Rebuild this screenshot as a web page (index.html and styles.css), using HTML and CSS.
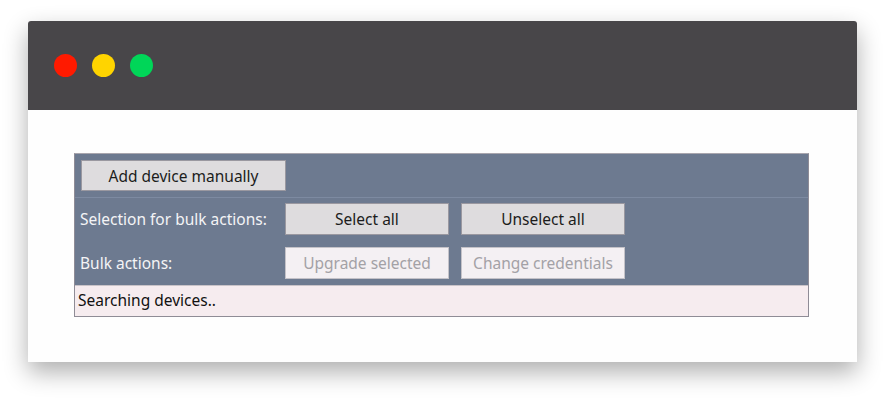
FILE: index.html
```html
<!DOCTYPE html>
<html lang="en">
<head>
  <meta charset="UTF-8" />
  <title>Device discovery</title>
  <link rel="stylesheet" href="styles.css">
</head>
<body>
  <div class="window">
    <div class="titlebar">
      <span class="dot red"></span>
      <span class="dot yellow"></span>
      <span class="dot green"></span>
    </div>
    <div class="content">
      <div class="panel">
        <div class="toolbar">
          <button class="btn btn-add">Add device manually</button>
        </div>
        <div class="bulk">
          <span class="label">Selection for bulk actions:</span>
          <button class="btn">Select all</button>
          <button class="btn">Unselect all</button>
          <span class="label">Bulk actions:</span>
          <button class="btn" disabled>Upgrade selected</button>
          <button class="btn" disabled>Change credentials</button>
        </div>
        <div class="status">Searching devices..</div>
      </div>
    </div>
  </div>
</body>
</html>
```

FILE: styles.css
```css
* { margin: 0; padding: 0; box-sizing: border-box; }

html, body {
  background: #fff;
  font-family: 'Noto Sans', 'Open Sans', sans-serif;
  height: 100%;
}

body {
  padding: 21px 0 0 28px;
}

.window {
  width: 829px;
  height: 341px;
  background: #fefefe;
  border-radius: 3px 3px 0 0;
  box-shadow: 0 10px 24px rgba(0, 0, 0, 0.32);
  overflow: hidden;
}

.titlebar {
  height: 89px;
  background: #484649;
  display: flex;
  align-items: center;
  gap: 15px;
  padding-left: 26px;
}

.dot {
  width: 23px;
  height: 23px;
  border-radius: 50%;
}
.red { background: #ff1a00; }
.yellow { background: #ffd400; }
.green { background: #00d658; }

.content {
  padding: 43px 0 0 46px;
}

.panel {
  width: 735px;
  border: 1px solid #8f8c96;
  border-top-color: #a9a6ae;
  background: #6d7a90;
}

.toolbar {
  height: 44px;
  padding: 6px 0 0 6px;
  border-bottom: 1px solid #7d8aa1;
}

.btn {
  font-family: inherit;
  font-size: 15.5px;
  color: #1c1c1c;
  background: #dedcde;
  border: 1px solid #9a98a0;
  height: 32px;
}

.btn:disabled {
  color: #a3a1a6;
  background: #f4f0f3;
  border-color: #c4c2c8;
}

.btn-add {
  width: 205px;
  height: 31px;
}

.bulk {
  display: grid;
  grid-template-columns: 193px 164px 164px;
  column-gap: 12px;
  row-gap: 12px;
  align-items: center;
  padding: 5px 0 6px 5px;
}

.label {
  color: #f4f4f6;
  font-size: 15.5px;
}

.status {
  height: 31px;
  background: #f6ecef;
  border-top: 1px solid #c9c3c8;
  font-size: 15.5px;
  color: #111;
  padding: 3px 0 0 3px;
}
```
